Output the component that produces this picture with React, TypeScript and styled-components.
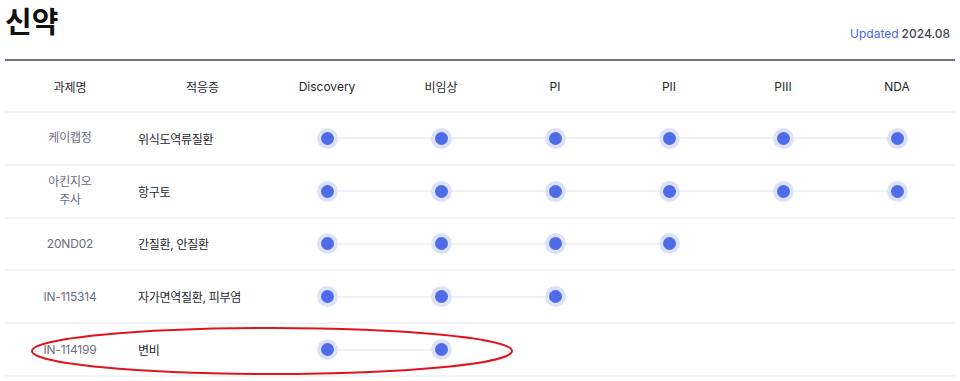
import React from 'react'
import styled, { createGlobalStyle } from 'styled-components'

const GlobalStyle = createGlobalStyle`
  body {
    margin: 0;
    background: #ffffff;
    font-family: "Inter", "Noto Sans CJK KR", sans-serif;
  }
`

const STAGES = ['Discovery', '비임상', 'PI', 'PII', 'PIII', 'NDA']

interface Pipeline {
  name: string[]
  indication: string
  reached: number
}

const PIPELINES: Pipeline[] = [
  { name: ['케이캡정'], indication: '위식도역류질환', reached: 6 },
  { name: ['아킨지오', '주사'], indication: '항구토', reached: 6 },
  { name: ['20ND02'], indication: '간질환, 안질환', reached: 4 },
  { name: ['IN-115314'], indication: '자가면역질환, 피부염', reached: 3 },
  { name: ['IN-114199'], indication: '변비', reached: 2 },
]

const StyledPage = styled.div`
  padding: 0 5px;
  width: 950px;
`

const StyledTop = styled.div`
  height: 59px;
  display: flex;
  justify-content: space-between;
  align-items: flex-start;
  padding-right: 5px;
  border-bottom: 2px solid #6f7384;
`

const StyledTitle = styled.h1`
  margin: 0;
  padding-top: 0;
  font-size: 29px;
  font-weight: 700;
  line-height: 40px;
  color: #111111;
  font-family: "Noto Sans CJK KR", sans-serif;
`

const StyledUpdated = styled.div`
  margin-top: 26px;
  font-size: 12px;
  color: #444752;
  font-weight: 500;
  span {
    color: #4a67e6;
    font-weight: 400;
    margin-right: 3px;
  }
`

const StyledTable = styled.div`
  position: relative;
`

const StyledRow = styled.div<{ $head?: boolean }>`
  display: grid;
  grid-template-columns: 130px 135px repeat(6, 114px);
  height: ${({ $head }) => ($head ? '50px' : '50.8px')};
  border-bottom: 2px solid #f3f3f6;
  align-items: center;
`

const StyledHeadCell = styled.div`
  text-align: center;
  font-size: 12px;
  color: #2a2a2e;
  font-family: "Inter", "Noto Sans CJK KR", sans-serif;
`

const StyledName = styled.div`
  text-align: center;
  font-size: 12px;
  line-height: 18px;
  letter-spacing: -0.2px;
  color: #6c6f7d;
`

const StyledIndication = styled.div`
  padding-left: 3px;
  font-size: 12px;
  letter-spacing: -0.3px;
  color: #26272b;
`

const StyledStage = styled.div<{ $left: boolean; $right: boolean }>`
  position: relative;
  height: 100%;
  display: flex;
  align-items: center;
  justify-content: center;
  &::before,
  &::after {
    content: '';
    position: absolute;
    top: 50%;
    height: 2px;
    margin-top: -1px;
    width: 50%;
    background: #f0f1f5;
  }
  &::before {
    left: 0;
    display: ${({ $left }) => ($left ? 'block' : 'none')};
  }
  &::after {
    right: 0;
    display: ${({ $right }) => ($right ? 'block' : 'none')};
  }
`

const StyledDot = styled.div`
  position: relative;
  z-index: 1;
  width: 13px;
  height: 13px;
  border-radius: 50%;
  background: #4f6ce8;
  box-shadow: 0 0 0 4px #dde2f9;
`

const StyledMark = styled.svg`
  position: absolute;
  left: 24px;
  top: 264px;
  pointer-events: none;
`

const App = () => {
  return (
    <StyledPage>
      <GlobalStyle />
      <StyledTop>
        <StyledTitle>신약</StyledTitle>
        <StyledUpdated>
          <span>Updated</span>2024.08
        </StyledUpdated>
      </StyledTop>
      <StyledTable>
        <StyledRow $head>
          <StyledHeadCell>과제명</StyledHeadCell>
          <StyledHeadCell>적응증</StyledHeadCell>
          {STAGES.map((s) => (
            <StyledHeadCell key={s}>{s}</StyledHeadCell>
          ))}
        </StyledRow>
        {PIPELINES.map((p) => (
          <StyledRow key={p.name.join('')}>
            <StyledName>
              {p.name.map((line) => (
                <div key={line}>{line}</div>
              ))}
            </StyledName>
            <StyledIndication>{p.indication}</StyledIndication>
            {STAGES.map((s, i) => (
              <StyledStage key={s} $left={i > 0 && i < p.reached} $right={i < p.reached - 1}>
                {i < p.reached && <StyledDot />}
              </StyledStage>
            ))}
          </StyledRow>
        ))}
        <StyledMark width="490" height="52" viewBox="0 0 490 52">
          <ellipse cx="243" cy="26" rx="240" ry="23" fill="none" stroke="#e0141e" strokeWidth="2" />
        </StyledMark>
      </StyledTable>
    </StyledPage>
  )
}

export default App
